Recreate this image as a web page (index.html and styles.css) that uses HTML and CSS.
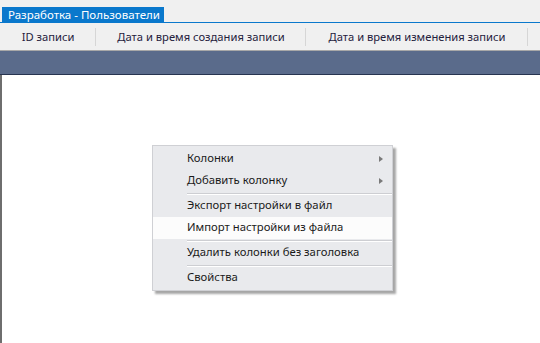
FILE: index.html
```html
<!DOCTYPE html>
<html lang="ru">
<head>
<meta charset="utf-8">
<link rel="stylesheet" href="styles.css">
</head>
<body>
<div class="window">
  <div class="tabstrip">
    <div class="tab">Разработка - Пользователи</div>
  </div>
  <div class="grid-header">
    <div class="col col-id">ID записи</div>
    <div class="col col-created">Дата и время создания записи</div>
    <div class="col col-changed">Дата и время изменения записи</div>
  </div>
  <div class="band"></div>
  <div class="content"></div>
</div>
<div class="menu">
  <div class="item">Колонки<span class="arrow"></span></div>
  <div class="item">Добавить колонку<span class="arrow"></span></div>
  <div class="sep"></div>
  <div class="item">Экспорт настройки в файл</div>
  <div class="item hover">Импорт настройки из файла</div>
  <div class="sep"></div>
  <div class="item">Удалить колонки без заголовка</div>
  <div class="sep"></div>
  <div class="item">Свойства</div>
</div>
</body>
</html>
```
FILE: styles.css
```css
html, body {
  margin: 0;
  padding: 0;
  height: 100%;
}
body {
  background: #f0f0f0;
  font-family: "Noto Sans", "Open Sans", sans-serif;
  font-size: 11.3px;
  overflow: hidden;
}
.window {
  display: flex;
  flex-direction: column;
  height: 100%;
}
.tabstrip {
  height: 23px;
  box-sizing: border-box;
  padding: 7px 0 0 2px;
  display: flex;
  border-bottom: 1px solid #0a78cc;
}
.tab {
  background: #0a78cc;
  color: #fff;
  width: 162px;
  box-sizing: border-box;
  padding-left: 6px;
  line-height: 16px;
  font-size: 11.5px;
  white-space: nowrap;
  overflow: hidden;
}
.grid-header {
  display: flex;
  height: 27px;
  border-bottom: 1px solid #a8a8a8;
  background: #f0f0f0;
}
.col {
  display: flex;
  align-items: center;
  justify-content: center;
  color: #24203c;
  position: relative;
  white-space: nowrap;
  font-size: 11.2px;
  padding-bottom: 1px;
  box-sizing: border-box;
}
.col::after {
  content: "";
  position: absolute;
  right: 0;
  top: 5px;
  bottom: 4px;
  width: 1px;
  background: #d6d6d6;
}
.col-id { width: 96px; }
.col-created { width: 210px; }
.col-changed { width: 222px; }
.band {
  height: 23px;
  background: #5a6b8b;
  border-bottom: 1px solid #273450;
}
.content {
  flex: 1;
  background: #fff;
  border-left: 2px solid #6e6e6e;
}
.menu {
  position: absolute;
  left: 152px;
  top: 145px;
  width: 241px;
  box-sizing: border-box;
  background: #e9eaed;
  border: 1px solid #cfd0d4;
  padding: 2px 0 1px;
  box-shadow: 3px 3px 2px rgba(0,0,0,0.35);
}
.item {
  height: 22px;
  line-height: 20px;
  padding-left: 34px;
  color: #1a1a1a;
  position: relative;
  white-space: nowrap;
}
.item.hover {
  background: #fcfcfc;
}
.arrow {
  position: absolute;
  right: 9px;
  top: 8px;
  width: 0;
  height: 0;
  border-top: 3.5px solid transparent;
  border-bottom: 3.5px solid transparent;
  border-left: 4px solid #7a7a7a;
}
.sep {
  height: 3px;
  margin-left: 34px;
  box-sizing: border-box;
  border-top: 1px solid transparent;
  position: relative;
}
.sep::before {
  content: "";
  display: block;
  height: 1px;
  background: #cdced2;
}
.sep::after {
  content: "";
  display: block;
  height: 1px;
  background: #ffffff;
}
```
